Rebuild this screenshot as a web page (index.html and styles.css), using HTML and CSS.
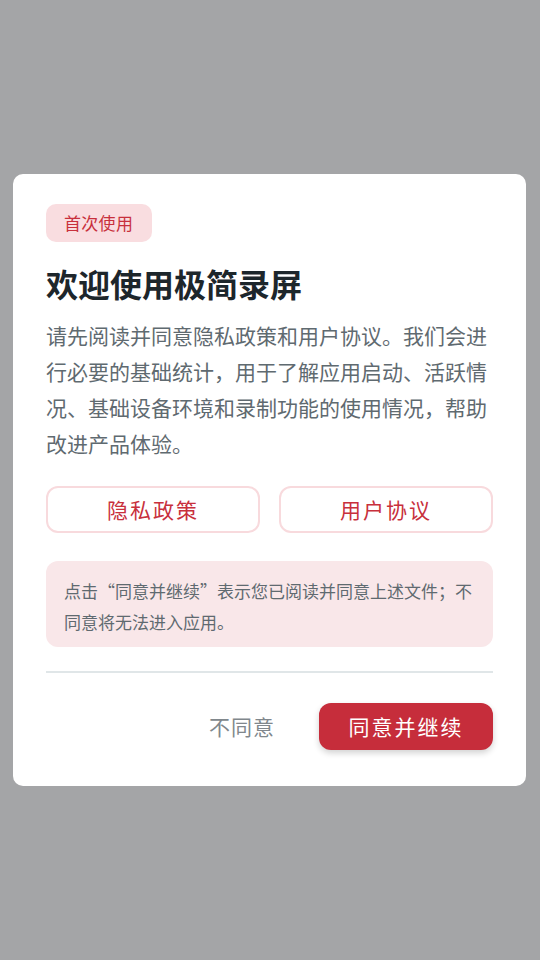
FILE: index.html
```html
<!DOCTYPE html>
<html lang="zh-CN">
<head>
    <meta charset="UTF-8">
    <meta name="viewport" content="width=device-width, initial-scale=1.0">
    <title>极简录屏</title>
    <link rel="stylesheet" href="styles.css">
</head>
<body>

    <div class="overlay">
        <div class="dialog">
            <span class="badge">首次使用</span>
            <h1 class="title">欢迎使用极简录屏</h1>
            <p class="desc">请先阅读并同意隐私政策和用户协议。我们会进行必要的基础统计，用于了解应用启动、活跃情况、基础设备环境和录制功能的使用情况，帮助改进产品体验。</p>

            <div class="links">
                <button class="btn-link">隐私政策</button>
                <button class="btn-link">用户协议</button>
            </div>

            <div class="note">点击“同意并继续”表示您已阅读并同意上述文件；不同意将无法进入应用。</div>

            <div class="divider"></div>

            <div class="actions">
                <button class="btn-text">不同意</button>
                <button class="btn-primary">同意并继续</button>
            </div>
        </div>
    </div>

</body>
</html>
```

FILE: styles.css
```css
* {
    box-sizing: border-box;
}

body {
    margin: 0;
    font-family: "Noto Sans CJK SC", "Noto Sans", sans-serif;
    background-color: #a4a5a7;
}

.overlay {
    height: 960px;
    display: flex;
    align-items: center;
    padding-left: 13px;
}

.dialog {
    width: 513px;
    margin-top: -1px;
    background-color: #fff;
    border-radius: 10px;
    padding: 30px 33px 36px 33px;
}

.badge {
    display: inline-block;
    height: 38px;
    line-height: 38px;
    padding: 0 19px 0 18px;
    background-color: #f9dde0;
    color: #c8303c;
    font-size: 17px;
    letter-spacing: 0.3px;
    border-radius: 10px;
}

.title {
    margin: 21px 0 0;
    font-size: 32px;
    line-height: 40px;
    font-weight: 600;
    color: #1d262b;
}

.desc {
    margin: 14px 0 0;
    font-size: 21px;
    line-height: 36px;
    color: #5f6a70;
}

.links {
    display: flex;
    gap: 19px;
    margin-top: 25px;
}

.btn-link {
    flex: 1;
    height: 47px;
    background: #fff;
    border: 2px solid #f8dadd;
    border-radius: 12px;
    color: #c8303c;
    font-family: inherit;
    font-size: 21px;
    letter-spacing: 2px;
    cursor: pointer;
}

.note {
    margin-top: 28px;
    padding: 14px 18px 10px;
    background-color: #f9e7e9;
    border-radius: 12px;
    font-size: 17px;
    line-height: 31px;
    color: #5f6a70;
}

.divider {
    margin-top: 24px;
    height: 2px;
    background-color: #e0e6e8;
}

.actions {
    display: flex;
    justify-content: flex-end;
    align-items: center;
    margin-top: 30px;
}

.btn-text {
    background: none;
    border: none;
    padding: 0 22px;
    height: 47px;
    font-family: inherit;
    font-size: 21px;
    letter-spacing: 1px;
    color: #80878c;
    cursor: pointer;
}

.btn-primary {
    width: 174px;
    height: 47px;
    margin-left: 22px;
    background-color: #c62d3b;
    color: #fff;
    border: none;
    border-radius: 12px;
    font-family: inherit;
    font-size: 21px;
    letter-spacing: 2px;
    box-shadow: 0 3px 6px rgba(0, 0, 0, 0.18);
    cursor: pointer;
}
```
